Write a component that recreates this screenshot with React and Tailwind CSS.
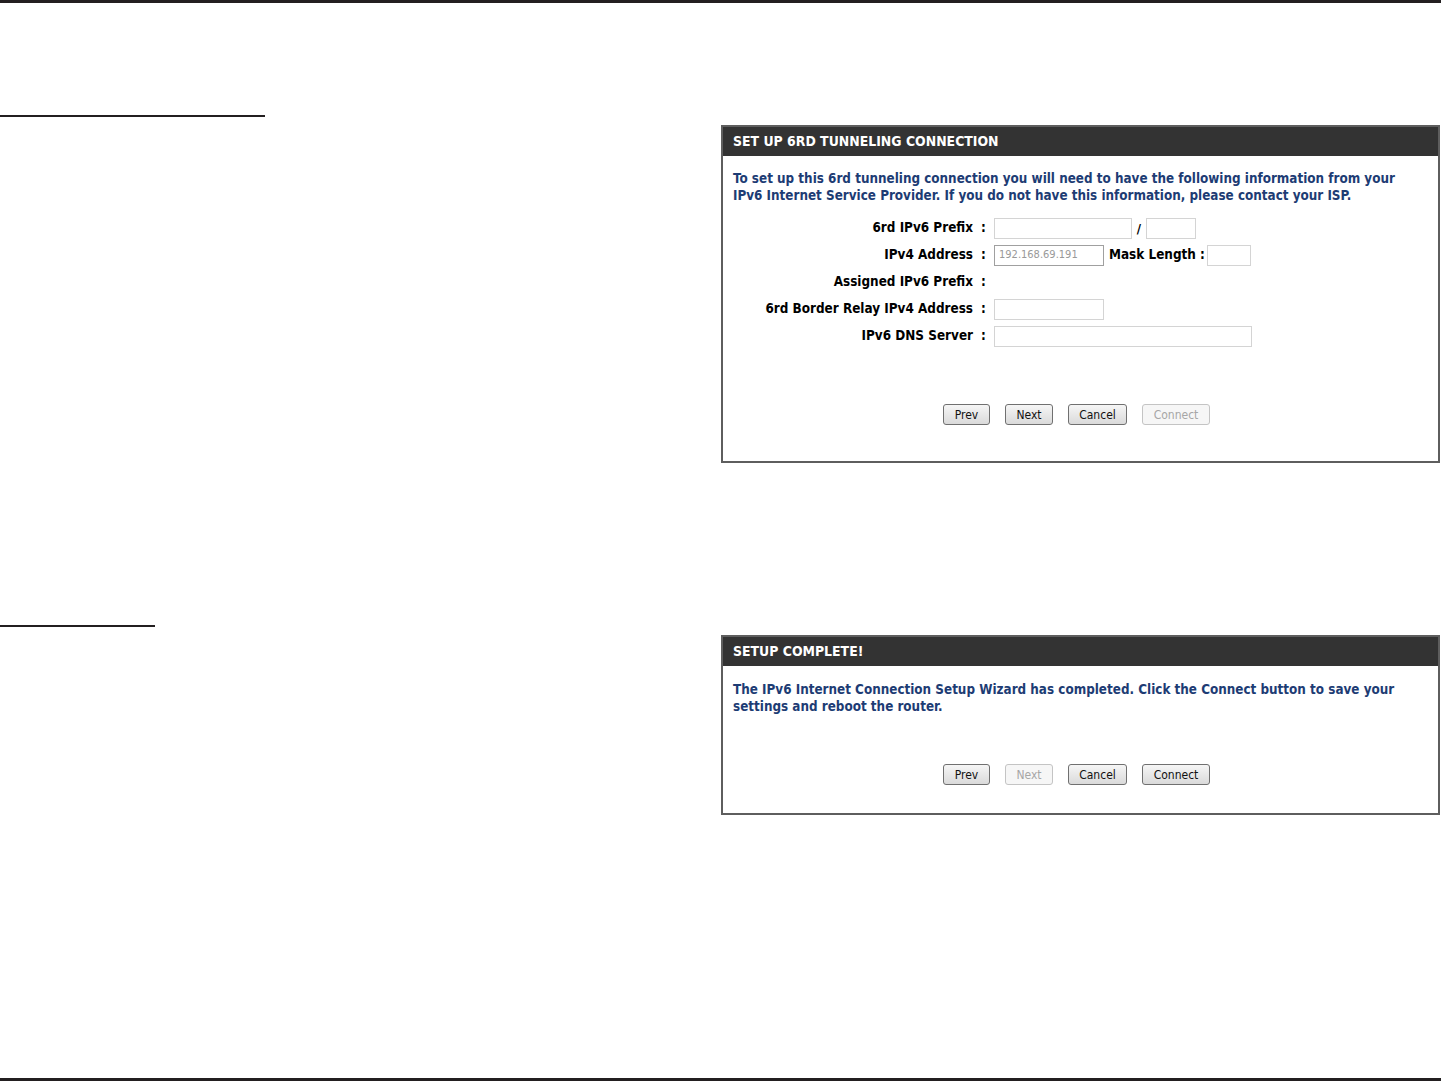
import React from "react";

const F = { fontFamily: '"DejaVu Sans Condensed", "DejaVu Sans", sans-serif' };

function Btn({ children, disabled, w }) {
  return (
    <div
      className={
        "h-[21px] flex items-center justify-center rounded-[3px] border text-[12px] " +
        (disabled
          ? "border-[#c4c4c4] bg-[#f6f6f6] text-[#a6a6a6]"
          : "border-[#707070] bg-gradient-to-b from-[#f6f6f6] to-[#dadada] text-[#111]")
      }
      style={{ width: w }}
    >
      {children}
    </div>
  );
}

function Row({ label, children }) {
  return (
    <div className="flex h-[27px] items-center">
      <div className="w-[250px] text-right font-bold text-[13.4px] text-black">{label}</div>
      <div className="w-[21px] text-center font-bold text-[13.4px] text-black">:</div>
      <div className="flex items-center">{children}</div>
    </div>
  );
}

function Input({ w, value, dark }) {
  return (
    <div
      className={
        "h-[21px] border bg-white flex items-center px-[4px] text-[11px] text-[#999] " +
        (dark ? "border-[#a0a0a0]" : "border-[#d4d4d4]")
      }
      style={{ width: w }}
    >
      {value}
    </div>
  );
}

export default function App() {
  return (
    <div className="w-[1441px] h-[1081px] bg-white flex flex-col border-t-[3px] border-b-[3px] border-[#231f20]" style={F}>
      {/* Section 1 */}
      <div className="flex">
        <div className="w-[721px]">
          <div className="mt-[112px] w-[265px] border-t-2 border-[#231f20]" />
        </div>
        <div className="mt-[122px] w-[719px] border-2 border-[#5e5e5e]">
          <div className="h-[29px] bg-[#333333] flex items-center px-[10px] pb-[1px] text-white font-bold text-[13.9px]">
            SET UP 6RD TUNNELING CONNECTION
          </div>
          <div className="pl-[10px] pr-[24px] pt-[14px] text-[13.35px] leading-[17px] font-bold text-[#1d3c74]">
            To set up this 6rd tunneling connection you will need to have the following information from your IPv6 Internet Service Provider. If you do not have this information, please contact your ISP.
          </div>
          <div className="mt-[11px]">
            <Row label="6rd IPv6 Prefix">
              <Input w={138} />
              <span className="w-[14px] text-center font-bold text-[13px]">/</span>
              <Input w={50} />
            </Row>
            <Row label="IPv4 Address">
              <Input w={110} value="192.168.69.191" dark />
              <span className="ml-[5px] mr-[2px] font-bold text-[13.4px] text-black">Mask Length :</span>
              <Input w={44} />
            </Row>
            <Row label="Assigned IPv6 Prefix" />
            <Row label="6rd Border Relay IPv4 Address">
              <Input w={110} />
            </Row>
            <Row label="IPv6 DNS Server">
              <Input w={258} />
            </Row>
          </div>
          <div className="mt-[54px] mb-[36px] flex justify-center gap-[15px] pr-[8px]">
            <Btn w={47}>Prev</Btn>
            <Btn w={48}>Next</Btn>
            <Btn w={59}>Cancel</Btn>
            <Btn w={68} disabled>Connect</Btn>
          </div>
        </div>
      </div>

      {/* Section 2 */}
      <div className="flex">
        <div className="w-[721px]">
          <div className="mt-[162px] w-[155px] border-t-2 border-[#231f20]" />
        </div>
        <div className="mt-[172px] w-[719px] border-2 border-[#5e5e5e]">
          <div className="h-[29px] bg-[#333333] flex items-center px-[10px] pb-[1px] text-white font-bold text-[13.9px]">
            SETUP COMPLETE!
          </div>
          <div className="pl-[10px] pr-[24px] pt-[15px] text-[13.35px] leading-[17px] font-bold text-[#1d3c74]">
            The IPv6 Internet Connection Setup Wizard has completed. Click the Connect button to save your settings and reboot the router.
          </div>
          <div className="mt-[49px] mb-[28px] flex justify-center gap-[15px] pr-[8px]">
            <Btn w={47}>Prev</Btn>
            <Btn w={48} disabled>Next</Btn>
            <Btn w={59}>Cancel</Btn>
            <Btn w={68}>Connect</Btn>
          </div>
        </div>
      </div>
    </div>
  );
}
